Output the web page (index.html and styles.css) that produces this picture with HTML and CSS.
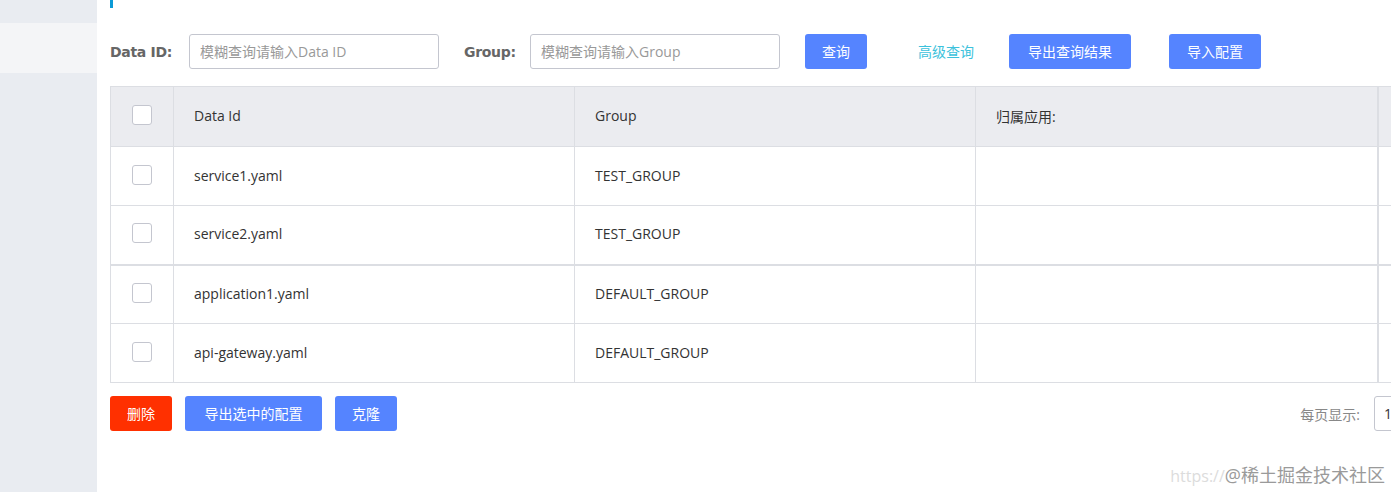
FILE: index.html
```html
<!DOCTYPE html>
<html lang="zh">
<head>
<meta charset="utf-8">
<title>配置列表</title>
<link rel="stylesheet" href="styles.css">
</head>
<body>
<div class="app">
  <aside class="sidebar">
    <div class="side-top"></div>
    <div class="side-item active"></div>
  </aside>
  <main class="main">
    <div class="title-bar"></div>
    <div class="filters">
      <span class="flabel">Data ID:</span>
      <input class="finput" placeholder="模糊查询请输入Data ID">
      <span class="flabel group-label">Group:</span>
      <input class="finput" placeholder="模糊查询请输入Group">
      <button class="btn btn-query">查询</button>
      <a class="adv-link">高级查询</a>
      <button class="btn btn-export">导出查询结果</button>
      <button class="btn btn-import">导入配置</button>
    </div>
    <div class="table-wrap">
      <table class="table">
        <colgroup>
          <col class="c-check"><col class="c-id"><col class="c-group"><col class="c-app"><col class="c-rest">
        </colgroup>
        <thead>
          <tr><th class="chk"><span class="checkbox"></span></th><th>Data Id</th><th>Group</th><th>归属应用:</th><th class="rest"></th></tr>
        </thead>
        <tbody>
          <tr><td class="chk"><span class="checkbox"></span></td><td>service1.yaml</td><td>TEST_GROUP</td><td></td><td class="rest"></td></tr>
          <tr class="thick"><td class="chk"><span class="checkbox"></span></td><td>service2.yaml</td><td>TEST_GROUP</td><td></td><td class="rest"></td></tr>
          <tr><td class="chk"><span class="checkbox"></span></td><td>application1.yaml</td><td>DEFAULT_GROUP</td><td></td><td class="rest"></td></tr>
          <tr><td class="chk"><span class="checkbox"></span></td><td>api-gateway.yaml</td><td>DEFAULT_GROUP</td><td></td><td class="rest"></td></tr>
        </tbody>
      </table>
    </div>
    <div class="footer">
      <div class="actions">
        <button class="btn btn-del">删除</button>
        <button class="btn btn-export-sel">导出选中的配置</button>
        <button class="btn btn-clone">克隆</button>
      </div>
      <div class="pager">
        <span class="pager-label">每页显示:</span>
        <span class="pager-select">1</span>
      </div>
    </div>
  </main>
</div>
<div class="watermark"><span class="wm-url">https://</span>@稀土掘金技术社区</div>
</body>
</html>
```
FILE: styles.css
```css
* { box-sizing: border-box; }
html, body { margin: 0; padding: 0; height: 100%; }
body {
  font-family: "Open Sans", "Noto Sans CJK SC", sans-serif;
  font-size: 14px;
  color: #333;
  background: #fff;
  overflow: hidden;
}
.app {
  display: grid;
  grid-template-columns: 97px 1fr;
  height: 492px;
}
.sidebar {
  background: #e9ecf1;
  display: flex;
  flex-direction: column;
}
.side-top { height: 23px; }
.side-item { height: 50px; }
.side-item.active { background: #f4f5f7; }

.main {
  padding-left: 13px;
  overflow: hidden;
  min-width: 0;
}
.title-bar {
  width: 3px;
  height: 8px;
  background: #0b9ad6;
}
.filters {
  display: flex;
  align-items: center;
  height: 35px;
  margin-top: 26px;
  white-space: nowrap;
}
.flabel {
  font-family: "DejaVu Sans", sans-serif;
  font-weight: bold;
  font-size: 14px;
  color: #666;
  width: 79px;
  letter-spacing: -0.3px;
}
.group-label { margin-left: 25px; width: 66px; }
.finput {
  width: 250px;
  height: 35px;
  border: 1px solid #c4c6cf;
  border-radius: 3px;
  padding: 0 10px;
  font-family: "Open Sans", "Noto Sans CJK SC", sans-serif;
  font-size: 14px;
  color: #333;
  outline: none;
}
.finput::placeholder { color: #999; }
.btn {
  height: 35px;
  border: none;
  border-radius: 3px;
  background: #5584ff;
  color: #fff;
  font-family: "Open Sans", "Noto Sans CJK SC", sans-serif;
  font-size: 14px;
  padding: 0 0 2px;
  cursor: pointer;
}
.btn-query { width: 62px; margin-left: 25px; }
.adv-link {
  color: #3cc2dc;
  margin-left: 51px;
  width: 60px;
  font-size: 14px;
  margin-bottom: 2px;
}
.btn-export { width: 122px; margin-left: 31px; }
.btn-import { width: 92px; margin-left: 38px; }

.table-wrap {
  margin-top: 17px;
  width: 1500px;
}
.table {
  border-collapse: collapse;
  table-layout: fixed;
  width: 1500px;
  border: 1px solid #dcdee3;
}
.c-check { width: 63px; }
.c-id { width: 401px; }
.c-group { width: 401px; }
.c-app { width: 402px; }
.table th, .table td {
  border: 1px solid #dcdee3;
  height: 59px;
  padding: 0 0 2px 20px;
  text-align: left;
  font-weight: normal;
  color: #333;
  font-size: 14px;
}
.table thead th { background: #ebecf0; height: 60px; }
.table th.chk, .table td.chk { padding: 0; text-align: center; }
.table th.rest, .table td.rest { border-left: 2px solid #dcdee3; }
.table tr.thick td { border-bottom: 2px solid #dcdee3; }
.checkbox {
  display: inline-block;
  width: 20px;
  height: 20px;
  border: 1px solid #c4c6cf;
  border-radius: 3px;
  background: #fff;
  vertical-align: middle;
  margin-bottom: 3px;
}

.footer {
  display: flex;
  justify-content: space-between;
  align-items: center;
  margin-top: 13px;
  width: 1281px;
}
.actions { display: flex; gap: 13px; }
.btn-del { width: 62px; background: #ff3000; }
.btn-export-sel { width: 137px; }
.btn-clone { width: 62px; }
.pager { display: flex; align-items: center; }
.pager-label { color: #888; font-size: 14px; margin-right: 14px; }
.pager-select {
  display: inline-flex;
  align-items: center;
  width: 60px;
  height: 35px;
  border: 1px solid #c4c6cf;
  border-radius: 3px;
  padding-left: 9px;
  color: #333;
  margin-right: -43px;
}

.watermark {
  position: absolute;
  right: 6px;
  bottom: 5px;
  font-size: 18px;
  color: #9a9a9a;
  text-shadow: 0 0 2px #fff;
}
.wm-url { color: #dcdcdc; font-size: 16px; }
```
